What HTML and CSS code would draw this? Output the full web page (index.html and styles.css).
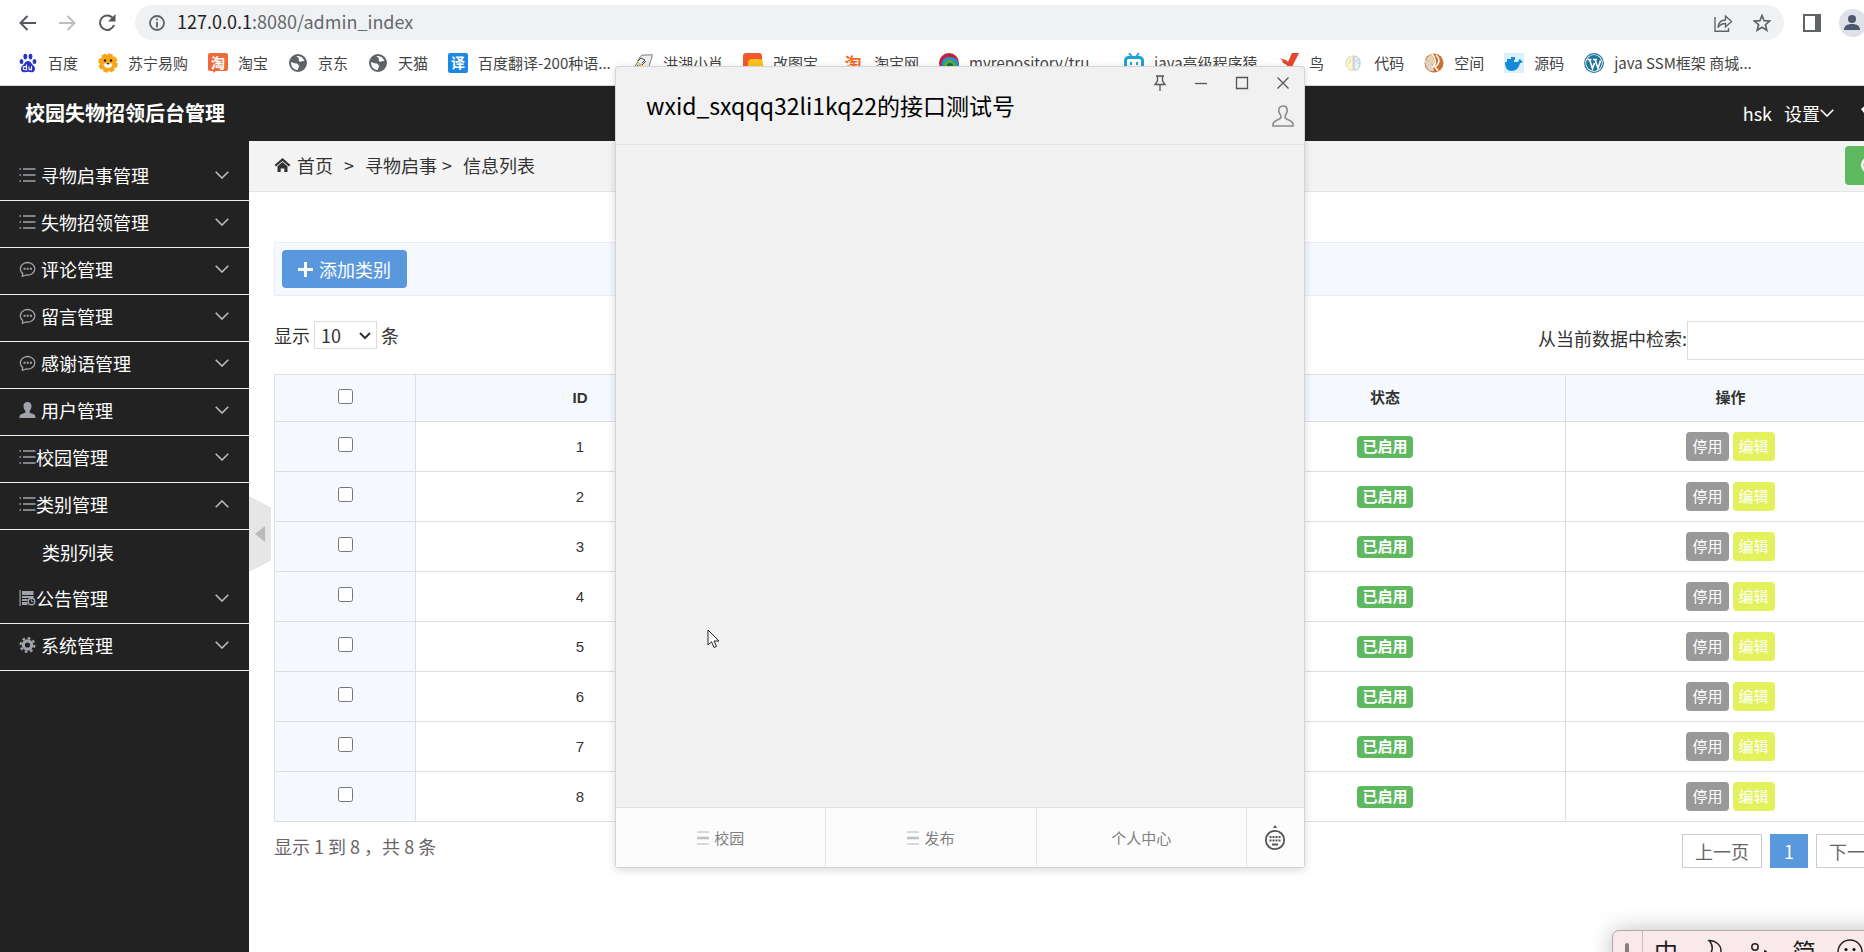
FILE: index.html
```html
<!DOCTYPE html>
<html lang="zh-CN">
<head>
    <meta charset="UTF-8">
    <meta name="viewport" content="width=device-width, initial-scale=1.0">
    <title>校园失物招领后台管理</title>
    <link rel="stylesheet" href="styles.css">
</head>
<body>

<!-- shared icons -->
<svg class="sprite" aria-hidden="true">
    <symbol id="i-list" viewBox="0 0 16 16"><path d="M0 2h1.500M3.500 2H16M0 8h1.500M3.500 8H16M0 14h1.500M3.500 14H16" stroke="currentColor" stroke-width="1.500" fill="none"/></symbol>
    <symbol id="i-chat" viewBox="0 0 16 16"><path d="M3.200 12.500A7.200 6.300 0 1 1 6.500 14L2.800 15.400z" fill="none" stroke="currentColor" stroke-width="1.300" stroke-linejoin="round"/><path d="M4 6.700h2v2H4zM7.200 6.700h2v2h-2zM10.400 6.700h2v2h-2z" fill="currentColor"/></symbol>
    <symbol id="i-user" viewBox="0 0 16 16"><path d="M8 0c2.800 0 4 1.800 4 4 0 2-.8 3.600-1.800 4.700v2c2.600.9 5.800 1.500 5.800 4V16H0v-1.300c0-2.500 3.200-3.100 5.800-4v-2C4.800 7.600 4 6 4 4c0-2.200 1.200-4 4-4z" fill="currentColor"/></symbol>
    <symbol id="i-notice" viewBox="0 0 16 16"><path d="M.6 0v16" stroke="currentColor" stroke-width="1.200"/><path d="M2.500 1H14v4H2.500zM2.500 6H14v2H2.500zM2.500 9H8v2H2.500zM2.500 12H8v3H2.500z" fill="currentColor"/><circle cx="12" cy="11.500" r="3.300" fill="none" stroke="currentColor" stroke-width="1.400"/><path d="M12 9.500v2.200h2" fill="none" stroke="currentColor"/></symbol>
    <symbol id="i-gear" viewBox="0 0 16 16"><circle cx="8" cy="8" r="4.200" fill="none" stroke="currentColor" stroke-width="3.200"/><circle cx="8" cy="8" r="6.900" fill="none" stroke="currentColor" stroke-width="2.200" stroke-dasharray="2.700 2.719"/></symbol>
    <symbol id="i-down" viewBox="0 0 14 8"><path d="M.7.7 7 7 13.300.7" fill="none" stroke="currentColor" stroke-width="1.600"/></symbol>
    <symbol id="i-globe" viewBox="0 0 20 20"><circle cx="10" cy="10" r="9" fill="#5f6368"/><path d="M3 9c2 .5 3 1.500 5 1.500 2.500 0 2 2 3.500 2.500-1 1-1.500 2-1.500 4-4 0-7.200-3-7-8zM8.500 3.200C11 2.500 15 4 16.500 8c-1 .5-2-.5-3 .5-1.500 1-3.500-.5-2.500-2 .5-1-1-1-1-2 0-.5-1-.5-1.500-1.300z" fill="#fff"/></symbol>
    <symbol id="i-menu" viewBox="0 0 12 14"><path d="M0 1h12M0 13h12" stroke="#ccc" stroke-width="1.300"/><path d="M0 7h12" stroke="#c0c0c0" stroke-width="2.500"/></symbol>
</svg>

<!-- browser toolbar -->
<div class="browser">
    <div class="nav-row">
        <button class="nav-btn" aria-label="后退"><svg width="17" height="16" viewBox="0 0 17 16"><path d="M17 8H1.500M8.500 1l-7 7 7 7" fill="none" stroke="#55585c" stroke-width="2"/></svg></button>
        <button class="nav-btn" aria-label="前进"><svg width="17" height="16" viewBox="0 0 17 16"><path d="M0 8h15.500M8.500 1l7 7-7 7" fill="none" stroke="#bcbec1" stroke-width="2"/></svg></button>
        <button class="nav-btn" aria-label="刷新"><svg width="18" height="18" viewBox="0 0 18 18"><path d="M15 4.500A7.200 7.200 0 1 0 16 11" fill="none" stroke="#55585c" stroke-width="2"/><path d="M17.500 0v7.500H10z" fill="#55585c"/></svg></button>
        <div class="address">
            <svg width="16" height="16" viewBox="0 0 16 16"><circle cx="8" cy="8" r="7" fill="none" stroke="#5f6368" stroke-width="1.800"/><path d="M8 3.500v2M8 7v5.500" stroke="#5f6368" stroke-width="1.800"/></svg>
            <span class="url">127.0.0.1<span class="path">:8080/admin_index</span></span>
            <svg width="20" height="20" viewBox="0 0 20 20"><path d="M2 4v14.200h13.500V15M5 14.500c.5-5 3-7.500 7.500-7.500V3l6 5.500-6 5.500v-3.500c-3.500 0-5.500 1-7.500 4z" fill="none" stroke="#5f6368" stroke-width="1.400"/></svg>
            <svg width="18" height="18" viewBox="0 0 18 18"><path d="M9 1.500l2.100 5.200 5.600.4-4.300 3.600 1.400 5.500L9 13.200l-4.800 3 1.400-5.500L1.300 7.100l5.600-.4z" fill="none" stroke="#5f6368" stroke-width="1.700"/></svg>
        </div>
        <button class="nav-btn" aria-label="侧边栏"><svg width="18" height="18" viewBox="0 0 18 18"><path d="M1 1h16v16H1z" fill="none" stroke="#5f6368" stroke-width="2"/><path d="M12 1h5v16h-5z" fill="#5f6368"/></svg></button>
        <span class="avatar"><svg width="28" height="28" viewBox="0 0 28 28"><circle cx="13" cy="10" r="4" fill="#4e586e"/><path d="M5 21c0-4 3-6 8-6s8 2 8 6z" fill="#4e586e"/></svg></span>
    </div>
    <div class="bookmarks">
        <a href="#"><svg viewBox="0 0 20 20"><g fill="#2a32c8"><ellipse cx="3.500" cy="8.500" rx="1.900" ry="2.600"/><ellipse cx="7.300" cy="3.600" rx="1.900" ry="2.800"/><ellipse cx="12.500" cy="3.600" rx="1.900" ry="2.800"/><ellipse cx="16.500" cy="8.500" rx="1.900" ry="2.600"/><path d="M10 8c3 0 3.500 3 5.500 4.500s2.300 6-1 6.700c-1.500.3-3-.4-4.500-.4s-3 .7-4.500.4c-3.300-.7-3-5.200-1-6.700S7 8 10 8z"/></g><path d="M8.500 11.500v5.300H6.700a1.500 1.500 0 0 1 0-3.200h1.800M11 13.500v2.300c0 1 .7 1 2.500 1v-3.500" fill="none" stroke="#fff" stroke-width="1.100"/></svg>百度</a>
        <a href="#"><svg viewBox="0 0 20 20"><circle cx="10" cy="10" r="8.500" fill="#f9a51a"/><circle cx="10" cy="10" r="8.300" fill="none" stroke="#f9a51a" stroke-width="3" stroke-dasharray="4.500 2"/><circle cx="7" cy="7.500" r="1.200" fill="#222"/><circle cx="13" cy="7.500" r="1.200" fill="#222"/><path d="M5.500 10.500h9c0 6-9 6-9 0z" fill="#fff"/><path d="M8.500 10h3L10 12z" fill="#222"/></svg>苏宁易购</a>
        <a href="#"><svg viewBox="0 0 20 20"><path d="M2 0h16a2 2 0 0 1 2 2v14a2 2 0 0 1-2 2H8l-3 2v-2H2a2 2 0 0 1-2-2V2a2 2 0 0 1 2-2z" fill="#ee6a3a"/><text x="10" y="15" text-anchor="middle" class="ico-char" fill="#fff">淘</text></svg>淘宝</a>
        <a href="#"><svg><use href="#i-globe"/></svg>京东</a>
        <a href="#"><svg><use href="#i-globe"/></svg>天猫</a>
        <a href="#" class="long"><svg viewBox="0 0 20 20"><rect width="20" height="20" rx="2" fill="#1e88e5"/><text x="10" y="15" text-anchor="middle" class="ico-char" fill="#fff">译</text></svg>百度翻译-200种语...</a>
        <a href="#"><svg viewBox="0 0 20 20"><path d="M2 13C5 11 5 2 11 2s7 0 8-1c0 5-1 5-2 9s-3 7-9 8c-3 0-3-4-6-5z" fill="#eee" stroke="#777"/><path d="M5 9l5 3-3 2z" fill="#e5b93c"/><path d="M8 5l4 2-3 3M4 12l4 3M5 8l3-3M9 12l4-4" stroke="#444" fill="none"/></svg>洪湖小肖</a>
        <a href="#" class="wide"><svg viewBox="0 0 20 20"><rect width="19" height="18" rx="3" fill="#f2592a"/><rect x="5" y="6" width="15" height="13" rx="4" fill="#fcc21b"/></svg>改图宝</a>
        <a href="#"><svg viewBox="0 0 20 20"><text x="9" y="17" text-anchor="middle" class="ico-char big" fill="#f26722">淘</text></svg>淘宝网</a>
        <a href="#" class="long"><svg viewBox="0 0 20 20"><circle cx="10" cy="10" r="10" fill="#c5203e"/><path d="M5 18C0 12 3 4 10 4s10 4 10 9l-4 6z" fill="#2395c4"/><path d="M6 18c-3-6 0-12 5-11s7 5 6 10z" fill="#58ad3c"/><circle cx="11" cy="13" r="3" fill="#1d6b35"/></svg>myrepository/tru...</a>
        <a href="#" class="java"><svg viewBox="0 0 20 20"><path d="M5 0l3 4M15 0l-3 4" stroke="#1ea4d2" stroke-width="2"/><rect x="1.500" y="4.500" width="17" height="14" rx="3" fill="#fff" stroke="#1ea4d2" stroke-width="3"/><path d="M7 9v3M13 9v3" stroke="#1ea4d2" stroke-width="2"/></svg>java高级程序猿</a>
        <a href="#"><svg viewBox="0 0 20 20"><path d="M0 5l3 1 4 1 2 2 4-9h7l-3 6-4 8-6 4 1-6-4-2-1-3z" fill="#e8472b"/></svg>鸟</a>
        <a href="#"><svg viewBox="0 0 20 20"><path d="M9 3c-4 0-7 3-7 7s3 8 7 7z" fill="#fbf6d8" stroke="#e8d98a"/><path d="M10 3c4 0 6 3 6 7s-2 8-6 7z" fill="#e9f0f7" stroke="#a9c1dc"/><path d="M6 6v3l-2 2M13 6v3l2 2" fill="none" stroke="#c4ced6"/></svg>代码</a>
        <a href="#"><svg viewBox="0 0 20 20"><circle cx="10" cy="10" r="9.500" fill="#c9712f"/><path d="M7 1c3 4 4 8 3 12L2 6z" fill="#e9cfb4"/><path d="M1 7c5 0 8 5 9 11-5 1-9-3-9-11z" fill="#dcd2c6"/><path d="M8 1c4 5 5 9 0 14M12 2c5 5 3 9-1 12l3 4" fill="none" stroke="#fff" stroke-width="1.500"/></svg>空间</a>
        <a href="#"><svg viewBox="0 0 20 20"><rect width="20" height="20" fill="#d9effb"/><path d="M1 9h13c1-2 1-3 2-3 1 1 1 2 3 2.500-1 1.500-2 1.500-3 1.500-1 5-4 8-9 8-4 0-6-4-6-9z" fill="#1488d9"/><path d="M3 6h3v3H3zM6 6h4v3H6zM7 4h4v3H7z" fill="#1488d9"/></svg>源码</a>
        <a href="#"><svg viewBox="0 0 20 20"><circle cx="10" cy="10" r="9.300" fill="#fff" stroke="#21759b" stroke-width="1.200"/><circle cx="10" cy="10" r="7.900" fill="#21759b"/><path d="M3.500 6.500h4M9 6.500h4M5.500 6.500l3 9L10.500 10M11 6.500l3 9 2.500-8" fill="none" stroke="#fff" stroke-width="1.600"/></svg>java SSM框架 商城...</a>
    </div>
</div>

<!-- admin page -->
<div class="page">
    <header class="header">
        <span class="logo">校园失物招领后台管理</span>
        <div class="user-info">
            <span>hsk</span>
            <a href="#">设置<svg class="arrow"><use href="#i-down"/></svg></a>
            <svg class="skin" viewBox="0 0 20 20"><path d="M0 6l6-5 4 3 4-3 6 5-3 4-2-1v9H5V9L3 10z" fill="#fff"/></svg>
        </div>
    </header>

    <div class="body">
        <nav class="sidebar">
            <a href="#"><svg class="ico"><use href="#i-list"/></svg>寻物启事管理<svg class="arrow"><use href="#i-down"/></svg></a>
            <a href="#"><svg class="ico"><use href="#i-list"/></svg>失物招领管理<svg class="arrow"><use href="#i-down"/></svg></a>
            <a href="#"><svg class="ico"><use href="#i-chat"/></svg>评论管理<svg class="arrow"><use href="#i-down"/></svg></a>
            <a href="#"><svg class="ico"><use href="#i-chat"/></svg>留言管理<svg class="arrow"><use href="#i-down"/></svg></a>
            <a href="#"><svg class="ico"><use href="#i-chat"/></svg>感谢语管理<svg class="arrow"><use href="#i-down"/></svg></a>
            <a href="#"><svg class="ico"><use href="#i-user"/></svg>用户管理<svg class="arrow"><use href="#i-down"/></svg></a>
            <a href="#" class="tight"><svg class="ico"><use href="#i-list"/></svg>校园管理<svg class="arrow"><use href="#i-down"/></svg></a>
            <a href="#" class="tight open"><svg class="ico"><use href="#i-list"/></svg>类别管理<svg class="arrow"><use href="#i-down"/></svg></a>
            <a href="#" class="sub">类别列表</a>
            <a href="#" class="tight"><svg class="ico"><use href="#i-notice"/></svg>公告管理<svg class="arrow"><use href="#i-down"/></svg></a>
            <a href="#"><svg class="ico"><use href="#i-gear"/></svg>系统管理<svg class="arrow"><use href="#i-down"/></svg></a>
        </nav>

        <main class="content">
            <button class="toggle" aria-label="收起菜单"><svg width="10" height="16" viewBox="0 0 10 16"><path d="M10 0v16L0 8z" fill="#bababa"/></svg></button>

            <div class="breadcrumb">
                <svg width="17" height="14" viewBox="0 0 16 14"><path d="M8 0l8 7-1.500 1.500L8 3 1.500 8.500 0 7z" fill="#333"/><path d="M8 4l5 4.200V14H9.800v-3.500H6.200V14H3V8.200z" fill="#333"/></svg>
                <a href="#">首页</a><span class="sep">&gt;</span><span>寻物启事</span><span class="sep near">&gt;</span><span>信息列表</span>
                <button class="refresh" aria-label="刷新"><svg width="18" height="18" viewBox="0 0 18 18"><path d="M15 5A7 7 0 1 0 16 11" fill="none" stroke="#fff" stroke-width="2.500"/><path d="M17.500 0v7H11z" fill="#fff"/></svg></button>
            </div>

            <div class="inner">
                <div class="toolbar">
                    <button class="add-btn"><svg width="15" height="15" viewBox="0 0 15 15"><path d="M7.500 0v15M0 7.500h15" stroke="#fff" stroke-width="3"/></svg>添加类别</button>
                </div>

                <div class="filters">
                    <label class="length">显示
                        <span class="select-wrap"><select><option>10</option><option>25</option><option>50</option></select><svg width="12" height="8" viewBox="0 0 12 8"><path d="M1 1l5 5 5-5" fill="none" stroke="#333" stroke-width="2"/></svg></span>
                        条</label>
                    <label class="search"><span>从当前数据中检索:</span><input type="text"></label>
                </div>

                <table>
                    <thead>
                        <tr><th class="c-check"><input type="checkbox" aria-label="全选"></th><th class="c-id">ID</th><th>类别名称</th><th class="c-state">状态</th><th class="c-act">操作</th></tr>
                    </thead>
                    <tbody>
                        <tr><th><input type="checkbox" aria-label="1"></th><td>1</td><td></td><td><span class="label">已启用</span></td><td><button class="stop">停用</button><button class="edit">编辑</button></td></tr>
                        <tr><th><input type="checkbox" aria-label="2"></th><td>2</td><td></td><td><span class="label">已启用</span></td><td><button class="stop">停用</button><button class="edit">编辑</button></td></tr>
                        <tr><th><input type="checkbox" aria-label="3"></th><td>3</td><td></td><td><span class="label">已启用</span></td><td><button class="stop">停用</button><button class="edit">编辑</button></td></tr>
                        <tr><th><input type="checkbox" aria-label="4"></th><td>4</td><td></td><td><span class="label">已启用</span></td><td><button class="stop">停用</button><button class="edit">编辑</button></td></tr>
                        <tr><th><input type="checkbox" aria-label="5"></th><td>5</td><td></td><td><span class="label">已启用</span></td><td><button class="stop">停用</button><button class="edit">编辑</button></td></tr>
                        <tr><th><input type="checkbox" aria-label="6"></th><td>6</td><td></td><td><span class="label">已启用</span></td><td><button class="stop">停用</button><button class="edit">编辑</button></td></tr>
                        <tr><th><input type="checkbox" aria-label="7"></th><td>7</td><td></td><td><span class="label">已启用</span></td><td><button class="stop">停用</button><button class="edit">编辑</button></td></tr>
                        <tr><th><input type="checkbox" aria-label="8"></th><td>8</td><td></td><td><span class="label">已启用</span></td><td><button class="stop">停用</button><button class="edit">编辑</button></td></tr>
                    </tbody>
                </table>

                <div class="table-foot">
                    <span>显示 1 到 8 ，共 8 条</span>
                    <div class="pager"><a href="#">上一页</a><a href="#" class="current">1</a><a href="#">下一页</a></div>
                </div>
            </div>
        </main>
    </div>
</div>

<!-- chat window floating over the page -->
<section class="chat">
    <div class="chat-head">
        <h1>wxid_sxqqq32li1kq22的接口测试号</h1>
        <div class="chat-side">
            <div class="win-btns">
                <button aria-label="置顶"><svg width="14" height="16" viewBox="0 0 14 16"><path d="M3 1h8M4.500 1v5L2 9.500h10L9.500 6V1M7 9.500V16" fill="none" stroke="#555" stroke-width="1.300"/></svg></button>
                <button aria-label="最小化"><svg width="14" height="14" viewBox="0 0 14 14"><path d="M1 7.500h12" stroke="#555" stroke-width="1.300"/></svg></button>
                <button aria-label="最大化"><svg width="14" height="14" viewBox="0 0 14 14"><path d="M1.500 1.500h11v11h-11z" fill="none" stroke="#555" stroke-width="1.300"/></svg></button>
                <button aria-label="关闭"><svg width="14" height="14" viewBox="0 0 14 14"><path d="M1.500 1.500l11 11M12.500 1.500l-11 11" stroke="#555" stroke-width="1.300"/></svg></button>
            </div>
            <svg class="contact" width="22" height="22" viewBox="0 0 22 22"><path d="M11 1c3 0 4.200 2 4.200 4.500 0 3-2.200 4-2.200 6.500 0 3 8 3 8 7V21H1v-2c0-4 8-4 8-7 0-2.500-2.200-3.500-2.200-6.500C6.800 3 8 1 11 1z" fill="none" stroke="#8c8c8c" stroke-width="1.600"/></svg>
        </div>
    </div>
    <div class="chat-body"></div>
    <div class="chat-menu">
        <button><svg width="12" height="14"><use href="#i-menu"/></svg>校园</button>
        <button><svg width="12" height="14"><use href="#i-menu"/></svg>发布</button>
        <button>个人中心</button>
        <button class="keyboard" aria-label="键盘"><svg width="22" height="26" viewBox="0 0 22 26"><circle cx="11" cy="15" r="9.200" fill="none" stroke="#555" stroke-width="1.800"/><path d="M11 0l2 3H9z" fill="#555"/><path d="M5.500 12h11M5.500 15.500h11" stroke="#555" stroke-width="2" stroke-dasharray="2 1"/><path d="M8 19.500h6" stroke="#555" stroke-width="2"/></svg></button>
    </div>
</section>

<svg class="cursor" width="14" height="20" viewBox="0 0 14 20"><path d="M1 1v15l3.500-3.200L7 18.500l2.500-1.100L7 12h5z" fill="#fff" stroke="#222"/></svg>

<!-- input method bar -->
<div class="ime">
    <span class="grip"></span>
    <span class="ime-item">中</span>
    <span class="ime-item"><svg width="22" height="26" viewBox="0 0 22 26"><path d="M8 1.500c5 5 5 14-6 18 9 5 18 0 18-8C20 6 14 1 8 1.500z" fill="none" stroke="#222" stroke-width="1.500"/></svg></span>
    <span class="ime-item"><svg width="22" height="26" viewBox="0 0 22 26"><circle cx="8" cy="8" r="3.200" fill="none" stroke="#222" stroke-width="1.500"/><path d="M17 12c3 0 3 4 0 6" fill="none" stroke="#222" stroke-width="2"/></svg></span>
    <span class="ime-item">简</span>
    <span class="ime-item"><svg width="26" height="26" viewBox="0 0 26 26"><circle cx="13" cy="13" r="12" fill="none" stroke="#222" stroke-width="1.500"/><circle cx="9" cy="10.500" r="1.500"/><circle cx="17" cy="10.500" r="1.500"/><path d="M7 15c2 5 10 5 12 0" fill="none" stroke="#222" stroke-width="1.500"/></svg></span>
</div>

</body>
</html>
```
FILE: styles.css
```css
* {
    box-sizing: border-box;
}
html, body {
    height: 100%;
}
body {
    position: relative;
    display: flex;
    flex-direction: column;
    margin: 0;
    overflow: hidden;
    background: #fff;
    color: #333;
    font-family: "Noto Sans CJK SC", "Noto Sans", sans-serif;
    font-size: 18px;
    line-height: 24px;
}
a {
    color: inherit;
    text-decoration: none;
}
button {
    margin: 0;
    padding: 0;
    border: none;
    background: none;
    color: inherit;
    font: inherit;
    cursor: pointer;
}
svg {
    flex: none;
}
.sprite {
    position: absolute;
    width: 0;
    height: 0;
}

/* browser toolbar */
.browser {
    flex: none;
    width: 1880px;
    height: 86px;
    border-bottom: 1px solid #d5d7da;
    background: #fff;
}
.nav-row {
    display: flex;
    align-items: center;
    gap: 22px;
    padding: 5px 13px 0 18px;
}
.nav-btn {
    display: flex;
    justify-content: center;
    width: 18px;
}
.address {
    display: flex;
    flex: 1;
    align-items: center;
    gap: 20px;
    height: 35px;
    margin: 0 -3px 0 -3px;
    padding: 0 13px 0 14px;
    border-radius: 18px;
    background: #f0f1f3;
}
.url {
    flex: 1;
    margin-left: -8px;
    padding-bottom: 3px;
    color: #222;
}
.path {
    color: #65686c;
}
.avatar {
    display: flex;
    width: 28px;
    height: 28px;
    margin-left: -4px;
    border-radius: 50%;
    background: #dfe1e8;
}
.bookmarks {
    display: flex;
    gap: 20px;
    padding: 11px 18px 0;
    font-size: 15px;
    white-space: nowrap;
    color: #444;
}
.bookmarks a {
    display: flex;
    flex: none;
    align-items: center;
    gap: 10px;
}
.bookmarks svg {
    width: 20px;
    height: 20px;
}
.bookmarks .long {
    width: 165px;
}
.bookmarks .java {
    width: 135px;
}
.bookmarks .wide {
    width: 81px;
}
.ico-char {
    font-size: 14px;
    font-weight: bold;
}
.ico-char.big {
    font-size: 17px;
}

/* admin page */
.page {
    display: flex;
    flex: 1;
    flex-direction: column;
    min-width: 1921px;
}
.header {
    display: flex;
    align-items: center;
    justify-content: space-between;
    height: 55px;
    padding: 0 40px 2px 25px;
    background: #222;
    color: #fff;
}
.logo {
    font-size: 20px;
    font-weight: bold;
}
.arrow {
    width: 14px;
    height: 8px;
}
.user-info {
    display: flex;
    align-items: center;
    gap: 12px;
}
.user-info a {
    display: flex;
    align-items: center;
}
.skin {
    width: 20px;
    height: 20px;
    margin-left: 15px;
}
.body {
    display: flex;
    flex: 1;
}
.sidebar {
    flex: none;
    width: 249px;
    padding-top: 13px;
    background: #222;
    color: #fff;
}
.sidebar a {
    display: flex;
    align-items: center;
    gap: 5px;
    height: 47px;
    padding: 0 20px 5px 19px;
    border-bottom: 1px solid #eee;
}
.sidebar .tight {
    gap: 0;
}
.sidebar .sub {
    padding-bottom: 3px;
    padding-left: 42px;
    border-bottom: none;
}
.sidebar .ico {
    width: 17px;
    height: 16px;
    color: #a0a4aa;
}
.sidebar .arrow {
    margin-left: auto;
    color: #bbb;
}
.sidebar .open .arrow {
    transform: rotate(180deg);
}

/* content */
.content {
    position: relative;
    flex: 1;
}
.toggle {
    position: absolute;
    top: 355px;
    left: 0;
    display: flex;
    align-items: center;
    justify-content: center;
    width: 22px;
    height: 76px;
    background: #e6e6e6;
    clip-path: polygon(0 0, 100% 15%, 100% 85%, 0 100%);
}
.breadcrumb {
    display: flex;
    align-items: center;
    height: 51px;
    padding: 0 25px 2px;
    border-bottom: 1px solid #e5e5e5;
    background: #f4f4f4;
}
.breadcrumb svg {
    margin-right: 6px;
}
.sep {
    margin: 0 11px;
}
.sep.near {
    margin-left: 5px;
}
.refresh {
    width: 51px;
    height: 39px;
    margin-left: auto;
    padding-left: 15px;
    border-radius: 4px;
    background: #5eb95e;
    line-height: 0;
    text-align: left;
}
.inner {
    padding: 50px 25px 0;
}
.toolbar {
    height: 54px;
    padding: 7px;
    border: 1px solid #e8eef2;
    background: #f5f9fd;
}
.add-btn {
    display: flex;
    align-items: center;
    justify-content: center;
    gap: 6px;
    width: 125px;
    height: 38px;
    border-radius: 4px;
    background: #5a98de;
    color: #fff;
}
.filters {
    display: flex;
    align-items: flex-start;
    justify-content: space-between;
    height: 78px;
    padding-top: 25px;
}
.length, .search {
    display: flex;
    align-items: center;
}
.length {
    gap: 4px;
}
.select-wrap {
    position: relative;
    display: block;
    height: 28px;
}
.select-wrap select {
    width: 63px;
    height: 28px;
    padding: 0 0 1px 6px;
    border: 1px solid #ddd;
    background: #fff;
    color: #333;
    font: inherit;
    appearance: none;
}
.select-wrap svg {
    position: absolute;
    top: 11px;
    right: 6px;
    pointer-events: none;
}
.search span {
    padding-bottom: 5px;
}
.search input {
    width: 209px;
    height: 39px;
    padding: 0 8px;
    border: 1px solid #ddd;
    font: inherit;
}

/* table */
table {
    width: 100%;
    table-layout: fixed;
    border-collapse: collapse;
    font-family: "Liberation Sans", "Noto Sans CJK SC", sans-serif;
    font-size: 15px;
    line-height: 22px;
    text-align: center;
}
th, td {
    height: 50px;
    padding: 0;
    border: 1px solid #dcdfe2;
}
th {
    background: #f5f9fd;
}
thead th {
    height: 47px;
}
.c-check {
    width: 141px;
}
.c-id {
    width: 329px;
}
.c-state {
    width: 361px;
}
.c-act {
    width: 330px;
}
th input {
    display: block;
    width: 15px;
    height: 15px;
    margin: 0 auto 4px;
}
.label {
    display: inline-block;
    padding: 0 5px;
    border-radius: 4px;
    background: #5eb95e;
    color: #fff;
    font-weight: bold;
}
.stop, .edit {
    height: 29px;
    margin: 0 2px;
    padding: 0 6px;
    border-radius: 4px;
    background: #999;
    color: #fff;
}
.edit {
    background: #e3f25c;
}
.table-foot {
    display: flex;
    align-items: flex-start;
    justify-content: space-between;
    padding-top: 12px;
    color: #666;
}
.pager {
    display: flex;
    gap: 8px;
}
.pager a {
    padding: 4px 12px;
    border: 1px solid #ccc;
}
.pager .current {
    padding: 4px 13px;
    border-color: #5a98de;
    background: #5a98de;
    color: #fff;
}

/* chat window */
.chat {
    position: absolute;
    top: 66px;
    left: 615px;
    display: flex;
    flex-direction: column;
    width: 690px;
    height: 802px;
    border: 1px solid #d4d4d4;
    border-radius: 3px;
    background: #f1f1f1;
    box-shadow: 0 2px 8px rgba(0, 0, 0, 0.15);
}
.chat-head {
    display: flex;
    justify-content: space-between;
    height: 78px;
    padding: 8px 10px 0 30px;
    border-bottom: 1px solid #e4e4e4;
}
.chat-head h1 {
    margin: 14px 0 0;
    color: #000;
    font-size: 23px;
    font-weight: normal;
    line-height: 32px;
}
.chat-side {
    display: flex;
    flex-direction: column;
    align-items: flex-end;
    gap: 14px;
}
.win-btns {
    display: flex;
    align-items: center;
    gap: 27px;
    height: 16px;
    padding-right: 4px;
}
.win-btns button {
    display: flex;
}
.chat-body {
    flex: 1;
}
.chat-menu {
    display: flex;
    height: 60px;
    border-top: 1px solid #e0e0e0;
    background: #fcfcfc;
    color: #808080;
    font-size: 15px;
}
.chat-menu button {
    display: flex;
    flex: 1;
    align-items: center;
    justify-content: center;
    gap: 5px;
    border-right: 1px solid #e4e4e4;
}
.chat-menu .keyboard {
    flex: none;
    width: 57px;
    border-right: none;
}
.cursor {
    position: absolute;
    top: 629px;
    left: 707px;
}

/* input method bar */
.ime {
    position: absolute;
    top: 930px;
    left: 1612px;
    display: flex;
    width: 300px;
    height: 44px;
    border: 1px solid #b5a9ab;
    border-radius: 7px;
    background: #f9e9eb;
    box-shadow: 0 0 22px rgba(0, 0, 0, 0.25);
    color: #222;
    font-size: 24px;
}
.grip {
    width: 30px;
    padding: 12px 12px 0;
    border-right: 1px solid #c9bcbe;
}
.grip::before {
    content: "";
    display: block;
    width: 4px;
    height: 24px;
    border-radius: 2px;
    background: #8a7d7f;
}
.ime-item {
    width: 46px;
    padding-top: 8px;
    text-align: center;
    white-space: nowrap;
}
```
